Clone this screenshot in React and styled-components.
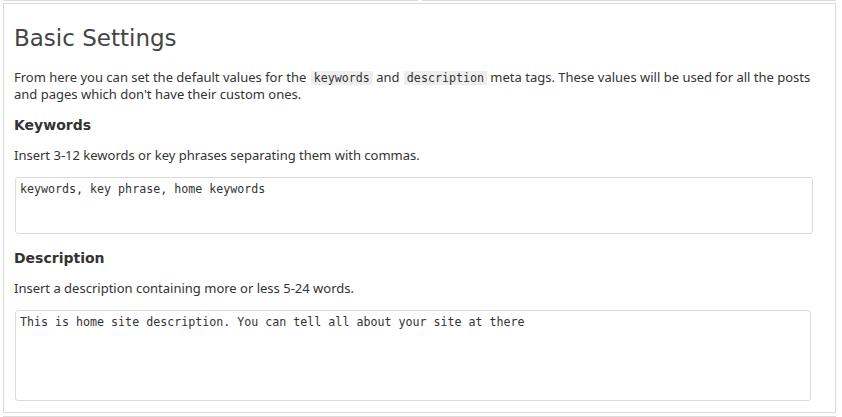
import React from "react";
import styled, { createGlobalStyle } from "styled-components";

const Global = createGlobalStyle`
  html, body { margin: 0; padding: 0; background: #fff; }
  body { font-family: "Noto Sans", "Open Sans", sans-serif; font-size: 13px; color: #333; }
`;

const Page = styled.div`
  padding: 0 6px 0 3px;
`;

const TopRow = styled.div`
  display: flex;
  gap: 4px;
`;

const TopBox = styled.div`
  flex: 1;
  height: 0;
  border-bottom: 1px solid #dcdcdc;
`;

const Panel = styled.section`
  margin-top: 2px;
  border: 1px solid #dcdcdc;
  padding: 0 10px 11px 10px;
  min-height: ${(p) => p.$minH || 0}px;
  & + & { margin-top: 3px; }
`;

const Title = styled.h2`
  margin: 22px 0 18px;
  font-family: "DejaVu Sans", sans-serif;
  font-weight: normal;
  font-size: 23px;
  line-height: 25px;
  color: #444;
`;

const Text = styled.p`
  margin: ${(p) => p.$mt || 0}px 0 0;
  font-size: 13px;
  line-height: 16px;
  color: #333;
`;

const Code = styled.code`
  font-family: "DejaVu Sans Mono", monospace;
  font-size: 11.65px;
  background: #eeeeee;
  padding: 0 3px;
  margin-left: 1px;
`;

const Heading = styled.h3`
  margin: ${(p) => p.$mt}px 0 0;
  font-family: "DejaVu Sans", sans-serif;
  font-weight: bold;
  font-size: 14px;
  line-height: 17px;
  color: #333;
`;

const Area = styled.textarea`
  display: block;
  box-sizing: border-box;
  margin: ${(p) => p.$mt}px 0 0 1px;
  width: ${(p) => p.$w}px;
  height: ${(p) => p.$h}px;
  padding: 4px;
  border: 1px solid #dcdcdc;
  border-radius: 3px;
  font-family: "DejaVu Sans Mono", monospace;
  font-size: 11.65px;
  color: #333;
  resize: none;
  outline: none;
  background: #fff;
`;

export default function App() {
  return (
    <Page>
      <Global />
      <TopRow>
        <TopBox />
        <TopBox />
      </TopRow>
      <Panel>
        <Title>Basic Settings</Title>
        <Text>
          From here you can set the default values for the <Code>keywords</Code> and{" "}
          <Code>description</Code> meta tags. These values will be used for all the posts and
          pages which don't have their custom ones.
        </Text>
        <Heading $mt={15}>Keywords</Heading>
        <Text $mt={13}>Insert 3-12 kewords or key phrases separating them with commas.</Text>
        <Area $mt={14} $w={798} $h={57} defaultValue="keywords, key phrase, home keywords" />
        <Heading $mt={16}>Description</Heading>
        <Text $mt={13}>Insert a description containing more or less 5-24 words.</Text>
        <Area
          $mt={14}
          $w={796}
          $h={91}
          defaultValue="This is home site description. You can tell all about your site at there"
        />
      </Panel>
      <Panel $minH={40} />
    </Page>
  );
}
